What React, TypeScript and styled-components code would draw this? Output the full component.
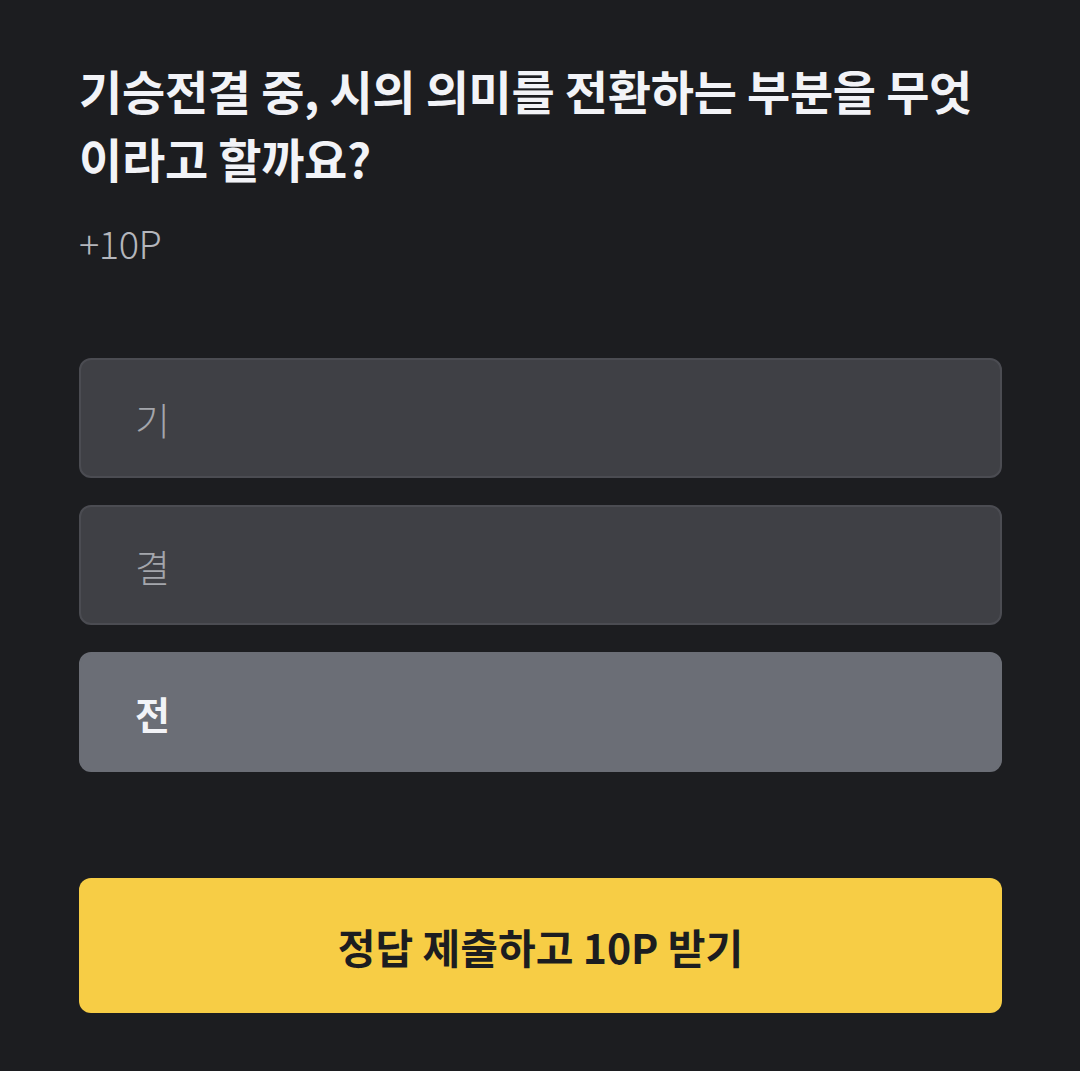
import React from "react";
import styled, { createGlobalStyle } from "styled-components";

const GlobalStyle = createGlobalStyle`
  html, body {
    margin: 0;
    padding: 0;
    background: #1c1d20;
  }
  body {
    font-family: "Noto Sans CJK KR", "Noto Sans", sans-serif;
  }
`;

const Page = styled.div`
  width: 1080px;
  height: 1071px;
  box-sizing: border-box;
  padding: 56px 78px 0 79px;
  background: #1c1d20;
  display: flex;
  flex-direction: column;
`;

const Title = styled.h1`
  margin: 0;
  font-size: 47px;
  font-weight: 700;
  line-height: 68px;
  color: #f2f3f7;
  letter-spacing: -0.3px;
`;

const Points = styled.p`
  margin: 29px 0 0;
  font-size: 38px;
  font-weight: 300;
  line-height: 44px;
  color: #b4b6bc;
  letter-spacing: -0.5px;
`;

const OptionList = styled.div`
  margin-top: 93px;
  display: flex;
  flex-direction: column;
  gap: 27px;
`;

const Option = styled.button<{ selected?: boolean }>`
  box-sizing: border-box;
  width: 100%;
  height: 120px;
  padding: 0 0 0 54px;
  display: flex;
  align-items: center;
  border-radius: 12px;
  border: 2px solid ${({ selected }) => (selected ? "#6b6e76" : "#4b4c52")};
  background: ${({ selected }) => (selected ? "#6b6e76" : "#3f4045")};
  color: ${({ selected }) => (selected ? "#f2f3f7" : "#a4a6ac")};
  font-family: inherit;
  font-size: 38px;
  font-weight: ${({ selected }) => (selected ? 700 : 300)};
  text-align: left;
  cursor: pointer;
`;

const SubmitButton = styled.button`
  margin-top: 106px;
  box-sizing: border-box;
  width: 100%;
  height: 135px;
  border: none;
  border-radius: 12px;
  background: #f7cd45;
  color: #1c1d20;
  font-family: inherit;
  font-size: 41px;
  font-weight: 700;
  cursor: pointer;
`;

const options = [
  { label: "기", selected: false },
  { label: "결", selected: false },
  { label: "전", selected: true },
];

export default function App() {
  return (
    <>
      <GlobalStyle />
      <Page>
        <Title>
          기승전결 중, 시의 의미를 전환하는 부분을 무엇
          <br />
          이라고 할까요?
        </Title>
        <Points>+10P</Points>
        <OptionList>
          {options.map((o) => (
            <Option key={o.label} selected={o.selected}>
              {o.label}
            </Option>
          ))}
        </OptionList>
        <SubmitButton>정답 제출하고 10P 받기</SubmitButton>
      </Page>
    </>
  );
}
